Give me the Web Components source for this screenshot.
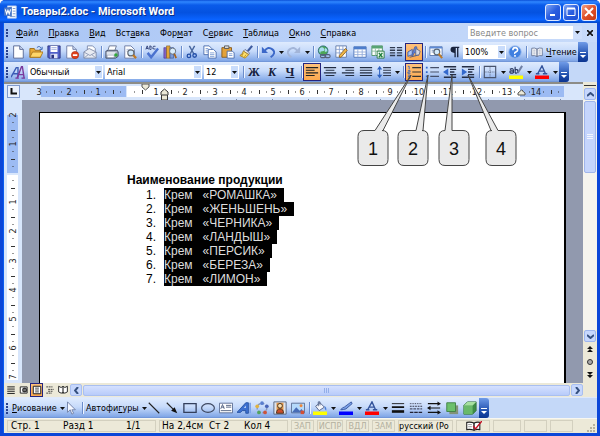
<!DOCTYPE html>
<html lang="ru">
<head>
<meta charset="utf-8">
<title>Товары2.doc - Microsoft Word</title>
<style>
html,body{margin:0;height:100%}
body{font:9px/12px "DejaVu Sans Condensed","DejaVu Sans",sans-serif;color:#000;background:#fff}
</style>
</head>
<body>
<word-window></word-window>
<script>
const ICONS={
word:'<path d="M4 1h10v14H4z" fill="#fff" stroke="#a9c4ee"/><path d="M10 4h3M10 7h3M10 10h3M7 13h6" stroke="#6f8fc8"/><path d="M0 3l9-1v11l-9-1z" fill="#4a78c8"/><path d="M1.500 5l1.500 5 1.500-4 1.500 4L7.500 5" fill="none" stroke="#fff" stroke-width="1.300"/>',
new:'<path d="M3 1h7l4 4v10H3z" fill="#fff" stroke="#51618f"/><path d="M10 1v4h4" fill="#cfdcf5" stroke="#51618f"/>',
open:'<path d="M1 14V4h5l1 2h6v8z" fill="#e9a935" stroke="#9a6a16"/><path d="M1 14l3-6h12l-3 6z" fill="#ffd668" stroke="#a87418"/><path d="M9 3q3-3 5 1M15 2v3h-3" fill="none" stroke="#2c5bb0"/>',
save:'<path d="M1 1h14v14H2l-1-1z" fill="#5160c8" stroke="#29327e"/><path d="M4 1h8v7H4z" fill="#fff"/><path d="M5 3h6M5 5h6" stroke="#9aa9dd"/><path d="M4 10h8v5H4z" fill="#dfe4f5"/><path d="M5 11h3v4H5z" fill="#29327e"/>',
perm:'<path d="M2 1h7l4 4v10H2z" fill="#fff" stroke="#6878a4"/><path d="M9 1v4h4" fill="#cfdcf5" stroke="#6878a4"/><circle cx="11.500" cy="11.500" r="4.200" fill="#e1401c" stroke="#9e2308" stroke-width=".6"/><path d="M9 11.500h5" stroke="#fff" stroke-width="2"/>',
mail:'<path d="M5 1h6l3 3v6H5z" fill="#fff" stroke="#7886a8"/><path d="M1 8l6-4 8 4v7H1z" fill="#e8ebf2" stroke="#7c87a3"/><path d="M1 8l7 4 7-4M1 15l5-4M15 15l-5-4" fill="none" stroke="#8c97b2"/>',
print:'<path d="M5 1h8l-2 6H3z" fill="#fff" stroke="#65718f"/><path d="M1 7l3-1h10l1 2v5l-3 2H1z" fill="#a9b1c2" stroke="#3f4960"/><path d="M2 8h10v3H2z" fill="#dfe4ec"/><path d="M3 12h7v2H3z" fill="#fff"/><circle cx="12.500" cy="11.500" r="2" fill="#2fa83a"/>',
preview:'<path d="M2 1h7l4 4v10H2z" fill="#fff" stroke="#65759f"/><path d="M4 5h5M4 7h4" stroke="#a8b7d8"/><circle cx="9" cy="9" r="3.500" fill="#cde6fb" stroke="#5e6672" stroke-width="1.300"/><path d="M11.500 11.500L15 15" stroke="#c07a23" stroke-width="2.500"/>',
spell:'<path d="M1 5l1.500-4L4 5M1.500 4h2M5.500 1v4h1.500q2-1 0-2 1-2-1.500-2M12 1.500q-3-1-3 1.500t3 1.500" fill="none" stroke="#2c3c74"/><path d="M3 9l4 5 8-10" fill="none" stroke="#4a72cf" stroke-width="2.800"/>',
research:'<path d="M1 3h3v12H1z" fill="#8063c4" stroke="#463190" stroke-width=".7"/><path d="M4 1h4v14H4z" fill="#e2a537" stroke="#80602d" stroke-width=".7"/><path d="M8 3h4v12H8z" fill="#7a9ad9" stroke="#36508a" stroke-width=".7"/><circle cx="11" cy="7" r="3.500" fill="#d9edfc" stroke="#5e6672"/><path d="M13 10l2 5" stroke="#a7631b" stroke-width="2"/>',
cut:'<path d="M5 1l5 9M11 1L6 10" stroke="#47669e" stroke-width="1.600"/><circle cx="4.500" cy="12.500" r="2" fill="none" stroke="#234fa8" stroke-width="1.500"/><circle cx="11" cy="12" r="2" fill="none" stroke="#234fa8" stroke-width="1.500"/>',
copy:'<path d="M1 1h6l3 3v7H1z" fill="#fff" stroke="#4568ac"/><path d="M6 5h6l3 3v7H6z" fill="#fff" stroke="#4568ac"/><path d="M3 4h3M3 6h3M3 8h3M8 9h5M8 11h5M8 13h5" stroke="#7c9bd4"/>',
paste:'<path d="M1 3h11v11H1z" fill="#e3a23a" stroke="#855718"/><path d="M4 1h5v3H4z" fill="#d8d8d8" stroke="#555"/><path d="M7 7h6l2 2v6H7z" fill="#fff" stroke="#4568ac"/><path d="M9 10h4M9 12h4" stroke="#7c9bd4"/>',
brush:'<path d="M15 1l-5 6" stroke="#3d5a9f" stroke-width="2.500"/><path d="M7 5l5 4-1 2-6-4z" fill="#dadde8" stroke="#6f7690"/><path d="M5 7l6 4-4 4-6-3q3-1 4-5z" fill="#ffe16b" stroke="#ab8118"/><path d="M5 9l-2 4M8 11l-2 3" stroke="#b98b21"/>',
undo:'<path d="M4 7q4-6 9-2t-2 9" fill="none" stroke="#3c68c8" stroke-width="2.200"/><path d="M1 2v7h7z" fill="#3c68c8"/>',
redo:'<path d="M12 7Q8 1 3 5t2 9" fill="none" stroke="#a3b5d8" stroke-width="2.200"/><path d="M15 2v7H8z" fill="#a3b5d8"/>',
link:'<circle cx="7" cy="6.500" r="5.500" fill="#4ca657" stroke="#2a6a7e"/><path d="M3 4q3-3 5 0t-2 3-1 3q-4-2-2-6M9 3q3 1 3 4l-3 1z" fill="#a8dbef"/><rect x="4" y="11" width="6" height="3.500" rx="1.700" fill="none" stroke="#56607a" stroke-width="1.300"/><rect x="9" y="11" width="6" height="3.500" rx="1.700" fill="none" stroke="#56607a" stroke-width="1.300"/>',
tables:'<path d="M1 1h12v13H1z" fill="#fff" stroke="#5c76a8"/><path d="M1 5h12M1 9h8M5 1v13M9 1v6" stroke="#8aa2d0"/><path d="M14 6l-7 8H5v-2l7-8z" fill="#f0b849" stroke="#8d601e"/>',
table:'<path d="M1 2h14v12H1z" fill="#fff" stroke="#4870b6"/><path d="M1 2h14v3H1z" fill="#4d7dcc"/><path d="M1 8h14M1 11h14M5.500 5v9M10.500 5v9" stroke="#92abd9"/>',
excel:'<path d="M1 1h12v11H1z" fill="#fff" stroke="#4a8f64"/><path d="M1 1h12v3H1z" fill="#58a474"/><path d="M1 7h12M5 4v8M9 4v8" stroke="#88bb9c"/><path d="M7 7h8v8H7z" fill="#edfaf0" stroke="#26733f"/><path d="M9 9l4 5M13 9l-4 5" stroke="#1b7c3a" stroke-width="1.500"/>',
cols:'<path d="M1 3h6M1 6h6M1 9h6M1 12h6M9 3h6M9 6h6M9 9h6M9 12h6" stroke="#303b4f" stroke-width="1.500"/>',
draw:'<path d="M5 12L9 2l2 0 2 10h-2l-1-3H8l-1 3z" fill="#5f83d5" stroke="#3652a0" stroke-width=".7"/><path d="M1 8l5-3v6l-5 2z" fill="#aac2f2" stroke="#3d5ba7"/><path d="M10 4l5 3-1 4-4 1z" fill="#d6d7df" stroke="#626a8a"/><path d="M3 14l8-2" stroke="#40507e"/>',
map:'<path d="M1 2h14v10H1z" fill="#fff" stroke="#5473ae"/><path d="M1 2h14v2H1z" fill="#5d8ad5"/><path d="M3 6h3M3 8h3" stroke="#6d89b8"/><circle cx="9" cy="8" r="3.300" fill="#d4ebfc" stroke="#596575" stroke-width="1.300"/><path d="M11 10l4 5" stroke="#ba7b2b" stroke-width="2.300"/>',
para:'<path d="M7 2h7v1.500h-1V14h-1.500V3.500H10V14H8.500V9Q4 9 4 5.500T7 2z" fill="#19233c"/>',
help:'<circle cx="8" cy="8" r="7" fill="#3f7fe0" stroke="#88aee8"/><path d="M5.500 6q0-3 2.700-3T11 5.600Q11 7 9 8t-1 2M8 11.500v2" fill="none" stroke="#fff" stroke-width="1.800"/>',
book:'<path d="M1 3q4-1 7 1 3-2 7-1v10q-4-1-7 1-3-2-7-1z" fill="#fff" stroke="#4f5f83"/><path d="M8 4v10" stroke="#4f5f83" stroke-width="1.500"/><path d="M3 5.500h3M3 8h3M3 10.500h3M10 5.500h3M10 8h3M10 10.500h3" stroke="#8692ae"/>',
vread:'<path d="M1 2l4 2 3-2 3 2 4-2v9l-4 2-3-1-3 1-4-2z" fill="#fff" stroke="#222" stroke-width="1.500"/><path d="M8 3v11" stroke="#222" stroke-width="1.800"/>',
styles:'<path d="M0 14L6 3h2v11M2.500 10H8" fill="none" stroke="#3a5bb5" stroke-width="1.600"/><path d="M7 15l5-13h1l2 13M9 11h6M5 15h4M12 15h4" fill="none" stroke="#7a3a9c" stroke-width="1.600"/>',
left:'<path d="M1 3h14M1 6h10M1 9h14M1 12h10" stroke="#222" stroke-width="1.400"/>',
center:'<path d="M1 3h14M3 6h10M1 9h14M3 12h10" stroke="#222c40" stroke-width="1.400"/>',
right:'<path d="M1 3h14M5 6h10M1 9h14M5 12h10" stroke="#222c40" stroke-width="1.400"/>',
just:'<path d="M1 3h14M1 6h14M1 9h14M1 12h14" stroke="#222c40" stroke-width="1.400"/>',
spacing:'<path d="M7 3h9M7 6h9M7 9h9M7 12h9" stroke="#333d52" stroke-width="1.300"/><path d="M3 2v12" stroke="#2f62c0" stroke-width="1.200"/><path d="M0 5l3-4 3 4zM0 11l3 4 3-4z" fill="#2f62c0"/>',
num:'<path d="M6 3h10M6 8h10M6 13h10" stroke="#333" stroke-width="1.400"/><path d="M1 1.500h1.500V5M1 6.500h2.500V8H1v1.500h3M1 11.500h2.500v3.500H1M1 13.200h2" fill="none" stroke="#3563bd"/>',
bul:'<path d="M6 3h10M6 8h10M6 13h10" stroke="#46506a" stroke-width="1.400"/><path d="M1 2h2v2H1zM1 7h2v2H1zM1 12h2v2H1z" fill="#3469cc"/>',
out:'<path d="M1 2h14M8 5h7M8 8h5M8 11h7M1 14h14" stroke="#252e45" stroke-width="1.500"/><path d="M6 4v8L0 8z" fill="#3469cc"/>',
in:'<path d="M1 2h14M8 5h7M8 8h5M8 11h7M1 14h14" stroke="#252e45" stroke-width="1.500"/><path d="M1 4v8l6-4z" fill="#3469cc"/>',
border:'<path d="M1.500 1.500h13v13h-13z" fill="none" stroke="#49546d" stroke-width="1.300"/><path d="M8 2v12M2 8h12" stroke="#49546d" stroke-dasharray="1 1"/>',
hilite:'<path d="M0 12h16v4H0z" fill="#ff0"/><path d="M1 5q4-2 4 1v3M5 7Q1 6 1 8t4 1M7 2v7M7 6q3-2 3 1t-3 2" fill="none" stroke="#26335b" stroke-width="1.300"/><path d="M15 1l-5 8" stroke="#7080a4" stroke-width="2.200"/>',
fontc:'<path d="M0 12h16v4H0z" fill="#f00"/><path d="M3 10L8 1l4 9M5 7h6M1 10h4M9 10h5" fill="none" stroke="#34549c" stroke-width="1.600"/>',
cursor:'<path d="M4 1v12l3-3 2 5 2-1-2-4h4z" fill="#f4f7ff" stroke="#6a7ca2"/>',
line:'<path d="M2 2l12 12" stroke="#222" stroke-width="1.300"/>',
arrow:'<path d="M2 2l9 9" stroke="#222" stroke-width="1.300"/><path d="M14 14l-7-3 4-4z" fill="#111"/>',
rect:'<path d="M1 3h14v10H1z" fill="none" stroke="#333f5c" stroke-width="1.500"/>',
oval:'<ellipse cx="8" cy="8" rx="7.300" ry="5" fill="none" stroke="#3f4962" stroke-width="1.300"/>',
tbox:'<path d="M.5 2.500h15v11H.5z" fill="#fff" stroke="#51658e"/><path d="M2 9l2-5 2 5M3 7h3M8 5h6M8 7h6M2 11h12" fill="none" stroke="#4a5a7c"/>',
wordart:'<path d="M0 13L10 2h3v12h-3v-3H6l-2 2z" fill="#3d70d0" stroke="#2450a0"/><path d="M8 8l2-3v3z" fill="#d5e5ff"/><path d="M15 2v12" stroke="#7fa4ea" stroke-width="2"/>',
diagram:'<circle cx="8" cy="8" r="5.500" fill="none" stroke="#8897b8" stroke-width="1.600" stroke-dasharray="3 2"/><circle cx="8" cy="2.500" r="2.100" fill="#5a7fce"/><circle cx="2.500" cy="6" r="2.100" fill="#e2b33f"/><circle cx="13.500" cy="6" r="2.100" fill="#4864b8"/><circle cx="4.500" cy="13" r="2.100" fill="#54a360"/><circle cx="11.500" cy="13" r="2.100" fill="#cb543c"/>',
clip:'<path d="M1 1h14v14H1z" fill="#dde4ee" stroke="#536078"/><path d="M4 2h8v12H4z" fill="#e99a48"/><circle cx="8" cy="5.500" r="2.700" fill="#fde1b0" stroke="#3c2c1c"/><path d="M4 14q0-5 4-5t4 5z" fill="#cc4e29" stroke="#3c2c1c"/>',
pic:'<path d="M.5 2.500h15v11H.5z" fill="#b5dafb" stroke="#56688c"/><path d="M1 13l5-6 4 4 2-2 3 4z" fill="#476cb7"/><circle cx="11.500" cy="5.500" r="1.700" fill="#ed873b"/><path d="M11 11h4v4h-4z" fill="#d34f35"/>',
fill:'<path d="M0 12h16v4H0z" fill="#ff0"/><path d="M3 6l5-4 5 5-6 4z" fill="#f5f7fc" stroke="#4c5c84"/><path d="M6 6V1h2v4" fill="none" stroke="#4c5c84"/><path d="M13 6q3 1 2 5-2-1-2-5" fill="#487dd7"/>',
linec:'<path d="M0 12h16v4H0z" fill="#00f"/><path d="M2 10q2-3 4-3l8-6 1 2-7 6q-3 1-6 1z" fill="#7ba0e6" stroke="#34549c"/>',
lstyle:'<path d="M1 3h14" stroke="#111"/><path d="M1 7h14" stroke="#111" stroke-width="2"/><path d="M1 12h14" stroke="#111" stroke-width="3"/>',
dash:'<path d="M1 3h14" stroke="#223" stroke-dasharray="1 1"/><path d="M1 6h14" stroke="#223" stroke-dasharray="2 1"/><path d="M1 9h14" stroke="#223" stroke-dasharray="3 1"/><path d="M1 13h14" stroke="#223" stroke-width="1.500" stroke-dasharray="4 1"/>',
arrows:'<path d="M1 3h13M2 8h13M1 13h13" stroke="#111" stroke-width="1.400"/><path d="M12 .5L16 3l-4 2.500zM4 5.500L0 8l4 2.500zM12 10.500l4 2.500-4 2.500z" fill="#111"/>',
shadow:'<path d="M5 5h10v10H5z" fill="#829278"/><path d="M2 2h10v10H2z" fill="#6cc06c" stroke="#3b7e42"/>',
cube:'<path d="M1 5l4-4h10v10l-4 4H1z" fill="#3d8c47" stroke="#34743c"/><path d="M1 5h10v10H1z" fill="#69b96a"/><path d="M1 5l4-4h10l-4 4z" fill="#a7e0a0"/>',
vnormal:'<path d="M2 3h12M2 6.500h12M2 10h12M2 13.500h12" stroke="#222" stroke-width="1.600"/>',
vweb:'<path d="M2 3h11v10H2z" fill="#fff" stroke="#222" stroke-width="1.500"/><circle cx="9" cy="8" r="4" fill="#333"/><path d="M7 8h4" stroke="#fff"/>',
vprint:'<path d="M2 2h12v12H2z" fill="#fff" stroke="#222" stroke-width="1.600"/><path d="M5 5h6M5 8h6M5 11h6" stroke="#333" stroke-width="1.400"/>',
voutline:'<path d="M2 3h10M5 7h9M5 10h8M2 13h9" stroke="#333" stroke-width="1.400" stroke-dasharray="3 1"/>',
proof:'<path d="M1 3q6-1 10 1 4-2 8-1v10q-5-1-8 1-4-2-10-1z" fill="#fff" stroke="#222" stroke-width="1.500"/><path d="M11 4v10" stroke="#222" stroke-width="2"/><path d="M3 6h5M3 9h5" stroke="#777"/><path d="M10 8l3 4 9-11" fill="none" stroke="#c41226" stroke-width="2"/>'
};
const svg=(n,s=14,w)=>`<svg width="${w||s}" height="${s}" viewBox="0 0 ${w?22:16} 16" aria-hidden="true">${ICONS[n]}</svg>`;
const DOWN='<svg width="5" height="3" viewBox="0 0 5 3" aria-hidden="true"><path d="M0 0h5L2.500 3z" fill="#111"/></svg>';
function define(name,html){
  const t=document.createElement('template');
  customElements.define(name,class extends HTMLElement{
    connectedCallback(){
      if(this.shadowRoot)return;
      t.innerHTML=typeof html==='function'?html(this):html;
      this.attachShadow({mode:'open'}).append(t.content.cloneNode(true));
    }
  });
}
const RESET='button,input,select{font:inherit;color:inherit;margin:0;padding:0;border:0;border-radius:0;background:none;box-sizing:border-box}svg{display:block;flex:none}';

define('tool-button',e=>`<style>${RESET}
:host{display:flex;flex:none;height:18px}
button{display:flex;align-items:center;justify-content:center;width:18px;height:18px}
:host([size=view]) button{width:13px;height:14px}
:host([on]) button{background:linear-gradient(#ffc27c,#fba84e);border:1px solid #24257f}
.l{font:bold 12px/18px "Liberation Serif",serif;color:#15203c}
.i{font-style:italic}.u{text-decoration:underline}
button.d{width:8px}:host([on]) .d{border:0}</style>
<button type="button" aria-label="${e.getAttribute('label')}" ${e.hasAttribute('on')?'aria-pressed="true"':''}>${e.hasAttribute('icon')?svg(e.getAttribute('icon'),e.getAttribute('size')=='view'?10:14):`<span class="l ${e.getAttribute('kind')||''}"><slot></slot></span>`}</button>
${e.hasAttribute('drop')?`<button type="button" class="d" aria-label="${e.getAttribute('label')}: варианты">${DOWN}</button>`:''}`);

define('text-button',`<style>${RESET}:host{display:flex;flex:none;box-sizing:border-box}button{display:flex;align-items:center;gap:3px;height:18px;white-space:nowrap}::slotted(svg){display:block}</style><button type="button"><slot></slot></button>`);
define('tool-sep','<style>:host{display:block;flex:none;width:1px;height:12px;margin:0 1px 0 2px;background:#6a8ccb;box-shadow:1px 0 #edf4ff}</style>');

define('tool-combo',e=>`<style>${RESET}
:host{display:grid;flex:none;height:14px;background:#fff}
select{grid-area:1/1;appearance:none;width:100%;height:14px;padding:0 9px 0 2px;outline:0;font-size:9px;line-height:14px}
span{grid-area:1/1;justify-self:end;width:9px;height:14px;display:grid;place-items:center;background:#c9dcfb;pointer-events:none;box-shadow:inset 0 0 0 1px #fff}</style>
<select aria-label="${e.getAttribute('label')}"><option>${e.getAttribute('value')}</option></select><span>${DOWN}</span>`);

define('tool-bar',`<style>${RESET}
:host{display:flex;height:20px;background:#c4d8f8}
.bar{display:flex;align-items:center;background:linear-gradient(#dfebfe,#c6dafa 45%,#84a9e8 92%,#6a8fd2);border-radius:0 3px 3px 0}
.grip{width:5px;height:12px;flex:none;background:radial-gradient(circle at 3px 2px,#27418f 1px,transparent 1px) 0 0/5px 3px}
.cap{align-self:stretch;width:10px;display:flex;align-items:end;justify-content:center;padding-bottom:4px;background:linear-gradient(#6f9be8,#1a49a8 70%,#0c3590);border-radius:0 3px 3px 0}
</style><div class="bar"><span class="grip"></span><slot></slot><button type="button" class="cap" aria-label="Параметры панели"><svg width="6" height="6" viewBox="0 0 6 6"><path d="M0 .5h6" stroke="#fff"/><path d="M0 3h6L3 6z" fill="#fff"/></svg></button></div>`);

define('title-bar',`<style>${RESET}
:host{display:flex;align-items:center;height:23px;gap:3px;padding:1px 3px 0 4px;box-sizing:border-box;background:linear-gradient(#0b50d8,#2f86ff 8%,#0a5bea 22%,#0452e0 55%,#0a63ff 85%,#0347c8);border-radius:5px 5px 0 0;color:#fff}
h1{margin:0;flex:1;font:bold 11px/20px Roboto,"Open Sans",sans-serif;white-space:nowrap;text-shadow:1px 1px #0b2d84}
.b{display:flex;gap:2px}
button{width:16px;height:17px;border:1px solid #dfe9ff;border-radius:3px;background:linear-gradient(135deg,#7fa6f5,#2a5ee0 50%,#1f4fd2);display:grid;place-items:center}
.x{background:linear-gradient(135deg,#f3a084,#e0512a 50%,#c53a12)}</style>
${svg('word',14)}<h1>Товары2.doc - Microsoft Word</h1>
<div class="b"><button type="button" aria-label="Свернуть"><svg width="12" height="12"><path d="M3 9h5" stroke="#fff" stroke-width="2"/></svg></button>
<button type="button" aria-label="Развернуть"><svg width="12" height="12"><path d="M2 2.500h8v7H2z" fill="none" stroke="#fff"/><path d="M2 2.500h8" stroke="#fff" stroke-width="2"/></svg></button>
<button type="button" class="x" aria-label="Закрыть"><svg width="12" height="12"><path d="M2 2l8 8M10 2l-8 8" stroke="#fff" stroke-width="2"/></svg></button></div>`);

define('menu-bar',`<style>${RESET}
:host{display:flex;align-items:center;height:19px;background:linear-gradient(90deg,#a9c5f5,#c8dbfa)}
.grip{width:5px;height:10px;background:radial-gradient(circle at 3px 2px,#27418f 1px,transparent 1px) 0 0/5px 3px}
nav{display:flex;gap:10px;padding-left:7px;flex:1}
nav button{white-space:nowrap;line-height:14px}
.q{display:flex;width:114px;height:13px;background:#fff;align-items:center}
input{min-width:0;flex:1;height:13px;padding:0 2px;outline:0}input::placeholder{color:#8a8a8a;opacity:1}
.q button{width:9px;height:13px;background:#cfdffb;display:grid;place-items:center}
.x{width:15px;height:13px;display:grid;place-items:center}</style>
<span class="grip"></span>
<nav aria-label="Меню"><button><u>Ф</u>айл</button><button><u>П</u>равка</button><button><u>В</u>ид</button><button>Вст<u>а</u>вка</button><button>Фор<u>м</u>ат</button><button>С<u>е</u>рвис</button><button><u>Т</u>аблица</button><button><u>О</u>кно</button><button><u>С</u>правка</button></nav>
<div class="q"><input aria-label="Введите вопрос" placeholder="Введите вопрос"><button type="button" aria-label="Список вопросов">${DOWN}</button></div>
<button type="button" class="x" aria-label="Закрыть документ"><svg width="6" height="6"><path d="M0 0l6 6M6 0L0 6" stroke="#111" stroke-width="1.600"/></svg></button>`);

/* Horizontal ruler: one centimetre is 29.2 units, zero sits at 105 */
define('h-ruler',()=>{
  let s='';
  for(let n=-3;n<=14;n++){
    const x=Math.round(105+29.2*n);
    if(n)s+=`<text x="${x}" y="11" text-anchor="middle">${Math.abs(n)}</text>`;
    for(const [k,h] of [[7,1],[15,4],[22,1]]){const t=x+k;if(t<540&&!(n==0&&k==22))s+=`<path d="M${t}.500 ${8-h/2}v${h}" stroke="#333"/>`;}
  }
  for(let x=178;x<560;x+=36)s+=`<path d="M${x}.500 15v2" stroke="#7c8aa8"/>`;
  return `<style>:host{display:flex;height:18px;background:#d8e6fb;border-top:2px solid #8d8c86;box-sizing:border-box;overflow:hidden}
button{width:13px;height:13px;margin:1px 2px 0 3px;padding:0;border:1px solid #7f99cc;background:#e9f0fc;flex:none;display:grid;place-items:center}
svg{display:block}.r{overflow:visible}text{font:9px "DejaVu Sans Condensed","DejaVu Sans",sans-serif;fill:#222}</style>
<button type="button" aria-label="Позиция табуляции"><svg width="7" height="7"><path d="M1.500 0v5.500H7" fill="none" stroke="#111" stroke-width="2"/></svg></button>
<svg class="r" width="550" height="17"><path d="M19 2h85v11H19zM498 2h44v11h-44z" fill="#9cbbf3"/><path d="M105 2h393v11H105z" fill="#fff"/>${s}
<path d="M120 0h7v3l-3.500 3L120 3z" fill="#ece9d8" stroke="#555"/><path d="M139 11V8l3.500-3 3.500 3v3M139.500 11h6v5h-6z" fill="#ece9d8" stroke="#333"/><path d="M496 11V9l3.500-3 3.500 3v2z" fill="#ece9d8" stroke="#555"/></svg>`;
});
define('v-ruler',()=>{
  let s='';
  for(let n=-2;n<=7;n++){
    const y=Math.round(73+29.2*n);
    if(n)s+=`<text transform="translate(12 ${y}) rotate(-90)" text-anchor="middle">${Math.abs(n)}</text>`;
    for(const [k,w] of [[7,1],[15,4],[22,1]])if(y+k<280)s+=`<path d="M${9-w/2} ${y+k}.500h${w}" stroke="#333"/>`;
  }
  return `<style>:host{display:block;width:18px;flex:none;background:#d8e6fb;overflow:hidden}svg{display:block}text{font:9px "DejaVu Sans Condensed","DejaVu Sans",sans-serif;fill:#222}</style>
<svg width="18" height="280"><path d="M3 15h11v58H3z" fill="#9cbbf3"/><path d="M3 75h11v205H3z" fill="#fff"/>${s}</svg>`;
});

define('doc-page',`<style>
:host{display:block;flex:1;min-width:0;background:#9199ae;padding:12px 17px 0;box-sizing:border-box}
article{height:100%;box-sizing:border-box;background:#fff;border:solid #000;border-width:1px 2px 0 1px;padding:60px 0 0 87px;font:12px/14px "Liberation Sans",Arial,sans-serif;overflow:hidden}
h2{font:inherit;font-weight:bold;margin:0;white-space:nowrap;padding-bottom:1px}
ol{margin:0;padding:0;list-style:none;counter-reset:n}
li{display:flex;counter-increment:n;white-space:pre}
li::before{content:counter(n) ".";width:37px;box-sizing:border-box;padding-left:19px}
li span{background:#000;color:#ddd;padding-right:7px}</style>
<article><h2>Наименование продукции</h2><ol>${['РОМАШКА','ЖЕНЬШЕНЬ','ЧЕРНИКА','ЛАНДЫШ','ПЕРСИК','БЕРЕЗА','ЛИМОН'].map(t=>`<li><span>Крем   «${t}»</span></li>`).join('')}</ol></article>`);

define('scroll-column',`<style>${RESET}
:host{display:flex;flex-direction:column;flex:none;width:14px;background:#ece9d8;align-items:center}
.s{width:12px;height:4px;margin-bottom:2px;background:#ece9d8;border-bottom:1px solid #333;box-sizing:border-box}
button{flex:none;width:12px;height:12px;display:grid;place-items:center}
.a{background:#c6d7fd;border:1px solid #9db6ee;border-radius:2px}
.t{flex:1;align-self:stretch;background:#f5f4ee;padding:1px 1px 0}
.th{height:72px;background:#c5d5fc;border:1px solid #9fb5ea;border-radius:2px;box-sizing:border-box;display:grid;place-items:center}
.n{display:flex;flex-direction:column;gap:1px;padding:1px 0 16px}</style>
<div class="s"></div><button class="a" aria-label="Вверх"><svg width="7" height="5"><path d="M0 4l3.500-3L7 4" fill="none" stroke="#35507f" stroke-width="2"/></svg></button>
<div class="t"><div class="th"><svg width="6" height="6"><path d="M0 .5h6M0 2.500h6M0 4.500h6" stroke="#f2f6ff"/></svg></div></div>
<button class="a" aria-label="Вниз"><svg width="7" height="5"><path d="M0 1l3.500 3L7 1" fill="none" stroke="#35507f" stroke-width="2"/></svg></button>
<div class="n"><button aria-label="Предыдущая страница"><svg width="6" height="6"><path d="M0 3l3-3 3 3zM0 6l3-3 3 3z" fill="#111"/></svg></button><button aria-label="Объект перехода"><svg width="8" height="8"><circle cx="4" cy="4" r="2.500" fill="#aaa" stroke="#333"/></svg></button><button aria-label="Следующая страница"><svg width="6" height="6"><path d="M0 0h6L3 3zM0 3h6L3 6z" fill="#111"/></svg></button></div>`);

define('view-row',`<style>${RESET}
:host{display:flex;align-items:center;height:14px;background:#ece9d8}
.v{display:flex;align-items:center;height:14px;width:66px}tool-button{height:14px}
.a{width:12px;height:12px;flex:none;background:#c6d7fd;border:1px solid #a9bff0;border-radius:2px;display:grid;place-items:center}
.t{flex:1;height:11px;margin:0 1px;background:linear-gradient(#d5e1ff,#b8cbfa);border:1px solid #a9bff0;border-radius:2px;display:grid;place-items:center;box-sizing:border-box}</style>
<div class="v"><tool-button size="view" icon="vnormal" label="Обычный режим"></tool-button><tool-button size="view" icon="vweb" label="Веб-документ"></tool-button><tool-button size="view" icon="vprint" label="Разметка страницы" on></tool-button><tool-button size="view" icon="voutline" label="Структура"></tool-button><tool-button size="view" icon="vread" label="Режим чтения"></tool-button></div>
<button class="a" aria-label="Влево"><svg width="5" height="7"><path d="M4 0L1 3.500 4 7" fill="none" stroke="#35507f" stroke-width="2"/></svg></button>
<div class="t"><svg width="6" height="5"><path d="M.5 0v5M2.500 0v5M4.500 0v5" stroke="#93aee8"/></svg></div>
<button class="a" aria-label="Вправо"><svg width="5" height="7"><path d="M1 0l3 3.500L1 7" fill="none" stroke="#35507f" stroke-width="2"/></svg></button>`);

define('status-bar',`<style>
:host{display:flex;gap:3px;height:15px;padding:1px 1px 0 3px;background:#ece9d8;font-size:10px;line-height:12px;box-sizing:border-box;border-top:1px solid #f8f7f1}
div{display:flex;align-items:center;box-sizing:border-box;height:12px;border:1px solid #d3d0bf;white-space:nowrap;flex:none;overflow:hidden;padding-left:2px}
.g{color:#b3b09f;justify-content:center;padding:0;font-size:9px}
svg{display:block}
.p{width:149px;padding-left:3px}.p span:nth-child(1){width:52px}.p span:nth-child(2){width:63px}
.q{width:129px}.q span:nth-child(1){width:47px}.q span:nth-child(2){width:35px}
.w23{width:23px}.w26{width:26px}.w28{width:28px}.w55{width:55px;padding:0;font-size:9px}.w34{width:34px;justify-content:center}
.grip{margin-left:auto;align-self:end}</style>
<div class="p"><span>Стр. 1</span><span>Разд 1</span><span>1/1</span></div><div class="q"><span>На 2,4см</span><span>Ст 2</span><span>Кол 4</span></div>
<div class="g w23">ЗАП</div><div class="g w26">ИСПР</div><div class="g w23">ВДЛ</div><div class="g w23">ЗАМ</div><div class="w55">русский (Ро</div><div class="w34">${svg('proof',12,16)}</div><div class="w28"></div><div class="w23"></div><div class="w23"></div>
<svg class="grip" width="10" height="10"><path d="M7 1h2v2H7zM4 4h2v2H4zM7 4h2v2H7zM1 7h2v2H1zM4 7h2v2H4zM7 7h2v2H7z" fill="#b5b19c"/></svg>`);

/* Numbered callouts that lie over the toolbar and the page */
define('call-outs',()=>{
  const c=[[358,375,383,411],[398,416,423,428],[439,445,452,452],[486,491,498,468]];
  return `<style>:host{position:absolute;left:0;top:0;pointer-events:none}svg{display:block}text{font:18px "Liberation Sans",Arial,sans-serif;fill:#111}</style>
<svg width="530" height="170">${c.map(([x,a,b,t],i)=>`<path d="M${x+6} 130.500H${a}L${t} 75L${b} 130.500H${x+24}q6 0 6 6v23q0 6-6 6H${x+6}q-6 0-6-6v-23q0-6 6-6z" fill="#eaeaea" stroke="#444"/><text x="${x+15}" y="155" text-anchor="middle">${i+1}</text>`).join('')}</svg>`;
});

const LABELS={new:'Создать',open:'Открыть',save:'Сохранить',perm:'Разрешения',mail:'Сообщение',print:'Печать',preview:'Предварительный просмотр',spell:'Правописание',research:'Справочные материалы',cut:'Вырезать',copy:'Копировать',paste:'Вставить',brush:'Формат по образцу',undo:'Отменить',redo:'Вернуть',link:'Гиперссылка',tables:'Таблицы и границы',table:'Добавить таблицу',excel:'Таблица Excel',cols:'Колонки',draw:'Рисование',map:'Схема документа',para:'Непечатаемые знаки',help:'Справка',styles:'Стили',left:'По левому краю',center:'По центру',right:'По правому краю',just:'По ширине',spacing:'Интервал',num:'Нумерация',bul:'Маркеры',out:'Уменьшить отступ',in:'Увеличить отступ',border:'Границы',hilite:'Выделение цветом',fontc:'Цвет шрифта',cursor:'Выбор объектов',line:'Линия',arrow:'Стрелка',rect:'Прямоугольник',oval:'Овал',tbox:'Надпись',wordart:'WordArt',diagram:'Диаграмма',clip:'Картинка',pic:'Рисунок',fill:'Цвет заливки',linec:'Цвет линий',lstyle:'Тип линии',dash:'Тип штриха',arrows:'Вид стрелки',shadow:'Тень',cube:'Объем'};
const tools=s=>s.split(' ').map(t=>{
  if(t==='|')return '<tool-sep></tool-sep>';
  const [,n,f]=t.match(/^(\w+)([+!]?)$/);
  return `<tool-button icon="${n}" label="${LABELS[n]}"${f==='+'?' drop':f==='!'?' on':''}></tool-button>`;
}).join('');

define('word-window',`<style>
:host{display:flex;flex-direction:column;position:relative;min-height:100vh;background:#0b46d8;border-radius:5px 5px 0 0;overflow:hidden;box-sizing:border-box}
.body{flex:1;display:flex;flex-direction:column;margin:0 3px 3px;border-left:1px solid #0a5cf0;background:#ece9d8}
.fmt tool-combo{margin-right:2px}.z{width:43px}.c1{width:75px;margin-left:1px}.c2{width:97px}.c3{width:35px}
.main{flex:1;display:flex;min-height:280px}
.col{flex:1;min-width:0;display:flex;flex-direction:column}
.doc{flex:1;display:flex}
.read{width:50px;padding-left:3px}.m1{width:53px;padding-left:3px}.m2{width:61px;padding-left:2px}
.draw{border-top:1px solid #dfe9fb}
</style>
<title-bar></title-bar>
<div class="body">
<menu-bar></menu-bar>
<tool-bar>${tools('new open save perm mail | print preview | spell research | cut copy paste brush | undo+ redo+ | link tables table excel cols draw! | map para')}<tool-combo class="z" label="Масштаб" value="100%"></tool-combo>${tools('help |')}<text-button class="read">${svg('book',12)}<span><u>Ч</u>тение</span></text-button></tool-bar>
<tool-bar class="fmt">${tools('styles')}<tool-combo class="c1" label="Стиль" value="Обычный"></tool-combo><tool-combo class="c2" label="Шрифт" value="Arial"></tool-combo><tool-combo class="c3" label="Размер шрифта" value="12"></tool-combo><tool-sep></tool-sep><tool-button label="Полужирный">Ж</tool-button><tool-button kind="i" label="Курсив">К</tool-button><tool-button kind="u" label="Подчеркнутый">Ч</tool-button>${tools('| left! center right just spacing+ | num! bul out in | border+ hilite+ fontc+')}</tool-bar>
<div class="main"><div class="col"><h-ruler></h-ruler><div class="doc"><v-ruler></v-ruler><doc-page></doc-page></div><view-row></view-row></div><scroll-column></scroll-column></div>
<tool-bar class="draw"><text-button class="m1"><span><u>Р</u>исование</span>${DOWN}</text-button>${tools('cursor |')}<text-button class="m2"><span>Автофи<u>г</u>уры</span>${DOWN}</text-button>${tools('line arrow rect oval tbox wordart diagram clip pic | fill+ linec+ fontc+ lstyle dash arrows shadow cube')}</tool-bar>
<status-bar></status-bar>
</div>
<call-outs></call-outs>`);
</script>
</body>
</html>
